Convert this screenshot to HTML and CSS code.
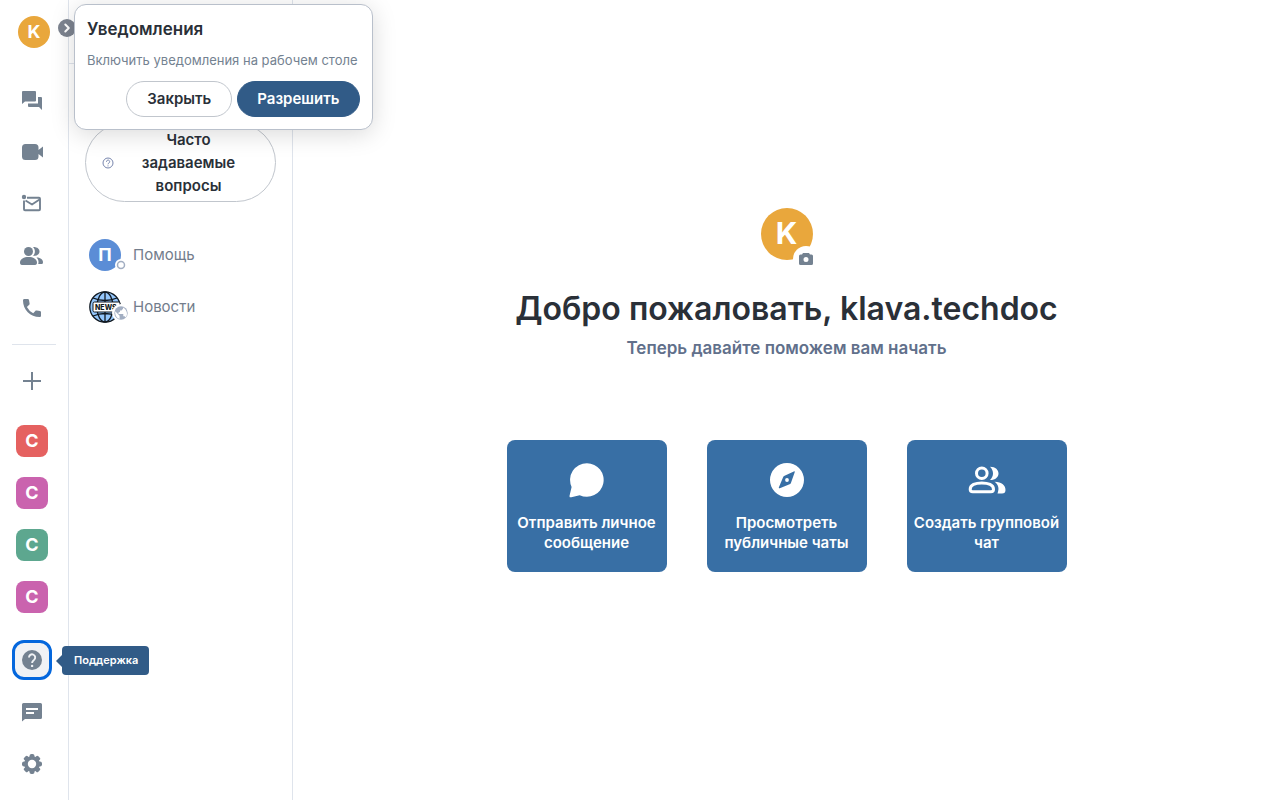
FILE: index.html
```html
<!DOCTYPE html>
<html lang="ru">
<head>
<meta charset="utf-8">
<meta name="viewport" content="width=device-width, initial-scale=1">
<title>Главная</title>
<link rel="stylesheet" href="styles.css">
</head>
<body>
<div class="app">
  <nav class="rail" aria-label="Пространства">
    <button class="user-button avatar" aria-label="Меню пользователя">K</button>
    <button class="rail-toggle" aria-label="Развернуть"><svg width="18" height="18" viewBox="0 0 18 18"><path d="m7.300 5.500 3.500 3.500-3.500 3.500" fill="none" stroke="#fff" stroke-width="2" stroke-linecap="round" stroke-linejoin="round"/></svg></button>
    <div class="rail-group">
      <button class="rail-button" aria-label="Все чаты"><svg viewBox="0 0 24 24"><path d="M3 3h12a1 1 0 0 1 1 1v8.500a1 1 0 0 1-1 1H5L2 16V4a1 1 0 0 1 1-1Z"/><path d="M18 9h3a1 1 0 0 1 1 1v12l-3-3H9a1 1 0 0 1-1-1v-2.500h10Z"/></svg></button>
      <button class="rail-button" aria-label="Видеоконференции"><svg viewBox="0 0 24 24"><path d="M5.500 4H15a3.500 3.500 0 0 1 3.500 3.500V10L23 6.500v11L18.500 14v2.500A3.500 3.500 0 0 1 15 20H5.500A3.500 3.500 0 0 1 2 16.500v-9A3.500 3.500 0 0 1 5.500 4Z"/></svg></button>
      <button class="rail-button" aria-label="Непрочитанные"><svg viewBox="0 0 24 24"><circle cx="4" cy="5" r="2.200"/><path d="M7 5.800h12a1 1 0 0 1 1 1v10.500a1 1 0 0 1-1 1H5a1 1 0 0 1-1-1V8.500M5.500 8.500 12 12.500l7.500-5" fill="none" stroke="currentColor" stroke-width="1.900" stroke-linejoin="round"/></svg></button>
      <button class="rail-button" aria-label="Люди"><svg viewBox="0 0 24 24"><circle cx="8.500" cy="7.500" r="4.500"/><path d="M0 18.500c0-3.500 4-5.500 8.500-5.500s8.500 2 8.500 5.500C17 20 16.500 21 15 21H2c-1.500 0-2-1-2-2.500ZM13 3.100c5 0 6.500 2.400 6.500 4.400S18 12 13 12c2.500-2.500 2.500-6.400 0-8.900ZM16.500 13.500C21 13.500 23 16 23 18.200c0 1.300-.5 1.800-1.800 1.800h-3c.8-2.500.1-4.800-1.700-6.500Z"/></svg></button>
      <button class="rail-button" aria-label="Звонки"><svg viewBox="0 0 24 24"><path d="M4.400 3h3.400c.7 0 1.100.4 1.200 1.100l.6 3.300c.1.600 0 1-.4 1.400l-2.300 2.100a15 15 0 0 0 6.300 6.300l2.100-2.300c.4-.4.8-.5 1.400-.4l3.300.6c.7.100 1 .6 1 1.200v3.400c0 .8-.6 1.300-1.400 1.300C10.200 21 3 13.500 3 4.400 3 3.600 3.600 3 4.400 3Z"/></svg></button>
    </div>
    <hr class="rail-divider">
    <div class="rail-group">
      <button class="rail-button" aria-label="Создать пространство"><svg viewBox="0 0 24 24"><path d="M12 3v18M3 12h18" fill="none" stroke="currentColor" stroke-width="2"/></svg></button>
    </div>
    <div class="rail-group rail-spaces">
      <button class="rail-button" aria-label="Пространство 1"><span class="space-icon red">C</span></button>
      <button class="rail-button" aria-label="Пространство 2"><span class="space-icon pink">C</span></button>
      <button class="rail-button" aria-label="Пространство 3"><span class="space-icon green">C</span></button>
      <button class="rail-button" aria-label="Пространство 4"><span class="space-icon pink">C</span></button>
    </div>
    <div class="rail-group rail-bottom">
      <div class="tooltip-anchor">
        <button class="rail-button focused" aria-describedby="support-tip" aria-label="Поддержка"><svg viewBox="0 0 24 24"><circle cx="12" cy="12" r="10"/><path d="M9 9.500a3.100 3.100 0 1 1 5.300 2.100c-1.200 1.100-2.200 1.500-2.200 3.400" fill="none" stroke="#f0f2f5" stroke-width="1.900"/><circle cx="12.100" cy="17.900" r="1.200" fill="#f0f2f5"/></svg></button>
        <span class="tooltip" id="support-tip" role="tooltip">Поддержка</span>
      </div>
      <button class="rail-button" aria-label="Обратная связь"><svg viewBox="0 0 24 24"><path d="M3.500 3h17A1.500 1.500 0 0 1 22 4.500v13a1.500 1.500 0 0 1-1.500 1.500H5l-3 2.500v-17A1.500 1.500 0 0 1 3.500 3Z"/><path d="M6 9h12M6 13h8" stroke="#fff" stroke-width="2"/></svg></button>
      <button class="rail-button" aria-label="Настройки"><svg viewBox="0 0 24 24"><circle cx="12" cy="12" r="7.800"/><g><rect x="9.500" y="2" width="5" height="20" rx="2"/><rect x="9.500" y="2" width="5" height="20" rx="1.500" transform="rotate(45 12 12)"/><rect x="9.500" y="2" width="5" height="20" rx="2" transform="rotate(90 12 12)"/><rect x="9.500" y="2" width="5" height="20" rx="1.500" transform="rotate(135 12 12)"/></g><circle cx="12" cy="12" r="4.200" fill="#fff"/></svg></button>
    </div>
  </nav>

  <aside class="room-panel">
    <div class="panel-header"></div>
    <div class="panel-body">
      <button class="faq-button">
        <svg width="12" height="12" viewBox="0 0 12 12" fill="none" stroke="#7785ad"><circle cx="6" cy="6" r="5"/><path d="M4.500 4.800a1.600 1.600 0 1 1 2.600 1.100C6.500 6.300 6 6.500 6 7.300M6 8.400v1"/></svg>
        <span>Часто задаваемые вопросы</span>
      </button>
      <div class="room-list">
        <a class="room" href="#help">
          <span class="room-avatar"><span class="avatar blue">П</span>
            <svg class="room-badge" viewBox="0 0 12 12"><circle cx="6" cy="6" r="6" fill="#fff"/><circle cx="6" cy="6" r="3.500" fill="none" stroke="#a2aec2" stroke-width="1.500"/></svg></span>
          <span class="room-name">Помощь</span>
        </a>
        <a class="room" href="#news">
          <span class="room-avatar">
            <svg width="32" height="32" viewBox="0 0 32 32"><circle cx="16" cy="16" r="15.200" fill="#94c6fb"/><g fill="none" stroke="#101820" stroke-width="1.300"><circle cx="16" cy="16" r="15.200"/><ellipse cx="16" cy="16" rx="8" ry="15"/><path d="M16 1v30M4 7q12 5 24 0M4 25q12-5 24 0"/></g><rect x="4" y="11" width="27" height="10" rx="1.500" fill="#fff" stroke="#101820"/><text class="news-label" x="6" y="18.500">NEWS</text></svg>
            <svg class="room-badge large" viewBox="0 0 18 18"><circle cx="9" cy="9" r="9" fill="#fff"/><circle cx="9" cy="9" r="6.700" fill="#a2aec2"/><path d="m3.200 7.200 4.400 4.500v3.200C4.600 14.300 2.900 11 3.200 7.200ZM11 3.500v1.300L9.500 6.500H8V8L6.500 8.500V10h4.800v2.200h1.300l1.200 1.200c2-2.500 1.800-7.200-2.800-9.900Z" fill="#fff"/></svg>
          </span>
          <span class="room-name">Новости</span>
        </a>
      </div>
    </div>
  </aside>

  <main class="home">
    <div class="profile">
      <span class="avatar profile-avatar">K</span>
      <button class="photo-button" aria-label="Изменить аватар"><svg width="16" height="16" viewBox="0 0 16 16"><path fill-rule="evenodd" d="M5 2h6l1 1.500h1.500A1.500 1.500 0 0 1 15 5v7.500a1.500 1.500 0 0 1-1.500 1.500h-11A1.500 1.500 0 0 1 1 12.500V5a1.500 1.500 0 0 1 1.500-1.500H4ZM8 6a2.500 2.500 0 1 0 0 5 2.500 2.500 0 0 0 0-5Z"/></svg></button>
    </div>
    <h1>Добро пожаловать, klava.techdoc</h1>
    <p class="subtitle">Теперь давайте поможем вам начать</p>
    <div class="actions">
      <button class="action-card"><svg viewBox="0 0 40 40"><path d="M20 3.200a16.800 16.800 0 1 1-7.300 32L4.300 37.300c-1.300.3-2-.4-1.700-1.700l2-8.600A16.800 16.800 0 0 1 20 3.200Z"/></svg><span>Отправить личное сообщение</span></button>
      <button class="action-card"><svg viewBox="0 0 40 40"><path fill-rule="evenodd" d="M20 3a17 17 0 1 0 0 34 17 17 0 0 0 0-34Zm7.700 9.200L24 22.700c-.3.800-.6 1.200-1.400 1.500l-9.800 4c-.8.300-1.200-.1-.9-.9l4.200-10c.3-.8.700-1.200 1.500-1.500l9.200-4.300c.8-.4 1.200 0 .9.700Z"/><circle cx="20" cy="20" r="1.900"/></svg><span>Просмотреть публичные чаты</span></button>
      <button class="action-card"><svg viewBox="0 0 40 40"><g fill="none" stroke="currentColor" stroke-width="3"><circle cx="14.800" cy="13.300" r="5.300"/><path d="M3.200 29.200c0-4.300 5.200-6.300 11.600-6.300s11.700 2 11.700 6.300c0 1.800-.7 2.600-2.500 2.600H5.700c-1.800 0-2.500-.8-2.500-2.600Z"/></g><path d="M23 6.700c5.700 0 8.500 3.400 8.500 6.700S28.700 20 23 20c4-4 4-9.300 0-13.300ZM27.500 21.800c7.500 0 11 3.900 11 8.100 0 2.400-1.100 3.500-3.500 3.500h-4.500c2.100-4.900.8-9-3-11.600Z"/></svg><span>Создать групповой чат</span></button>
    </div>
  </main>

  <section class="toast" role="alert" aria-labelledby="toast-title">
    <h2 id="toast-title">Уведомления</h2>
    <p>Включить уведомления на рабочем столе</p>
    <div class="toast-actions">
      <button class="pill">Закрыть</button>
      <button class="pill primary">Разрешить</button>
    </div>
  </section>
</div>
</body>
</html>
```
FILE: styles.css
```css
* {
  box-sizing: border-box;
}

body {
  margin: 0;
  font-family: Inter, "Liberation Sans", sans-serif;
  color: #2a3038;
  background: #fff;
}

button {
  margin: 0;
  padding: 0;
  border: 0;
  background: none;
  color: inherit;
  font: inherit;
  cursor: pointer;
}

h1,
h2,
p {
  margin: 0;
}

.app {
  position: relative;
  display: flex;
  min-height: 100vh;
}

.avatar {
  display: flex;
  align-items: center;
  justify-content: center;
  width: 32px;
  height: 32px;
  padding-bottom: 2px;
  border-radius: 50%;
  background: #e9a73c;
  color: #fff;
  font-size: 18px;
  font-weight: 700;
}

.avatar.blue {
  background: #5b8dd6;
}

.rail {
  position: relative;
  display: flex;
  flex: none;
  flex-direction: column;
  width: 69px;
  padding: 16px 12px;
  border-right: 1px solid #dfe4ec;
}

.user-button {
  align-self: flex-start;
  margin: 0 0 32px 6px;
}

.rail-toggle {
  position: absolute;
  top: 19px;
  left: 58px;
  width: 18px;
  height: 18px;
  border-radius: 50%;
  background: #7c838f;
}

.rail-toggle svg {
  display: block;
}

.rail-group {
  display: flex;
  flex-direction: column;
  gap: 12px;
}

.rail-button {
  display: flex;
  align-items: center;
  justify-content: center;
  width: 40px;
  height: 40px;
  border-radius: 12px;
  color: #748291;
}

.rail-button svg {
  flex: none;
  width: 24px;
  height: 24px;
  fill: currentColor;
}

.rail-divider {
  width: 100%;
  margin: 16px 0;
  border: 0;
  border-top: 1px solid #dfe4ec;
}

.rail-spaces {
  margin-top: 20px;
}

.rail-bottom {
  margin-top: auto;
}

.space-icon {
  display: flex;
  align-items: center;
  justify-content: center;
  width: 32px;
  height: 32px;
  padding-bottom: 2px;
  border-radius: 8px;
  color: #fff;
  font-size: 18px;
  font-weight: 700;
}

.red {
  background: #e56160;
}

.pink {
  background: #ca63ae;
}

.green {
  background: #5da78f;
}

.focused {
  border: 3px solid #0467dd;
  background: #f0f2f5;
}

.tooltip-anchor {
  position: relative;
}

.tooltip {
  position: absolute;
  top: 6px;
  left: 50px;
  z-index: 2;
  padding: 6px 11px 6px 12px;
  border-radius: 4px;
  background: #315b87;
  color: #fff;
  font-size: 11px;
  font-weight: 600;
  line-height: 17px;
}

.tooltip::before {
  position: absolute;
  top: 9px;
  left: -6px;
  border: 6px solid transparent;
  border-right-color: #315b87;
  border-left: 0;
  content: "";
}

.room-panel {
  flex: none;
  width: 224px;
  border-right: 1px solid #dfe4ec;
}

.panel-header {
  height: 64px;
  border-bottom: 1px solid #dfe4ec;
}

.panel-body {
  padding: 59px 16px 0;
}

.faq-button {
  display: flex;
  align-items: center;
  width: 100%;
  padding: 4px 16px;
  border: 1px solid #c1c6cd;
  border-radius: 40px;
  font-size: 15px;
  font-weight: 600;
  line-height: 23px;
}

.faq-button svg {
  flex: none;
}

.faq-button span {
  flex: 1;
  padding: 0 12px 0 16px;
}

.room-list {
  display: flex;
  flex-direction: column;
  gap: 20px;
  padding: 37px 4px 0;
}

.room {
  display: flex;
  align-items: center;
  gap: 12px;
  color: #737d8c;
  font-size: 15px;
  text-decoration: none;
}

.room-name {
  padding-bottom: 2px;
}

.room-avatar {
  position: relative;
  width: 32px;
  height: 32px;
}

.room-badge {
  position: absolute;
  right: -6px;
  bottom: 0;
  width: 12px;
  height: 12px;
}

.room-badge.large {
  right: -9px;
  bottom: 1px;
  width: 18px;
  height: 18px;
}

.news-label {
  fill: #101820;
  font-size: 7px;
  font-weight: 800;
}

.home {
  display: flex;
  flex: 1;
  flex-direction: column;
  align-items: center;
  justify-content: center;
  padding: 0 20px 20px;
  text-align: center;
}

.profile {
  position: relative;
}

.profile-avatar {
  width: 52px;
  height: 52px;
  font-size: 30px;
}

.photo-button {
  position: absolute;
  right: -6px;
  bottom: -12px;
  display: flex;
  align-items: center;
  justify-content: center;
  width: 26px;
  height: 26px;
  border-radius: 50%;
  background: #fff;
}

.photo-button svg {
  fill: #748291;
}

h1 {
  margin-top: 28px;
  font-size: 32px;
  font-weight: 600;
  line-height: 42px;
}

.subtitle {
  margin-top: 6px;
  color: #61708b;
  font-size: 17px;
  font-weight: 600;
  line-height: 24px;
}

.actions {
  display: flex;
  flex-wrap: wrap;
  justify-content: center;
  gap: 40px;
  margin-top: 80px;
}

.action-card {
  display: flex;
  flex-direction: column;
  align-items: center;
  gap: 13px;
  width: 160px;
  min-height: 132px;
  padding: 20px 4px 19px;
  border-radius: 8px;
  background: #386fa5;
  color: #fff;
  font-size: 15px;
  font-weight: 600;
  line-height: 20px;
}

.action-card svg {
  width: 40px;
  height: 40px;
  fill: currentColor;
}

.toast {
  position: absolute;
  top: 4px;
  left: 74px;
  z-index: 3;
  padding: 12px;
  border: 1px solid #b9c0cb;
  border-radius: 12px;
  background: #fff;
  box-shadow: 0 4px 24px rgb(0 0 0 / 15%);
}

.toast h2 {
  font-size: 17px;
  font-weight: 600;
  line-height: 24px;
}

.toast p {
  margin: 9px 2px 11px 0;
  color: #748291;
  font-size: 13px;
  line-height: 20px;
}

.toast-actions {
  display: flex;
  justify-content: flex-end;
  gap: 5px;
}

.pill {
  height: 36px;
  padding: 0 20px 2px;
  border: 1px solid #c1c6cd;
  border-radius: 18px;
  font-size: 15px;
  font-weight: 600;
}

.pill.primary {
  padding: 0 19px 2px;
  border-color: #315b87;
  background: #315b87;
  color: #fff;
}
```
